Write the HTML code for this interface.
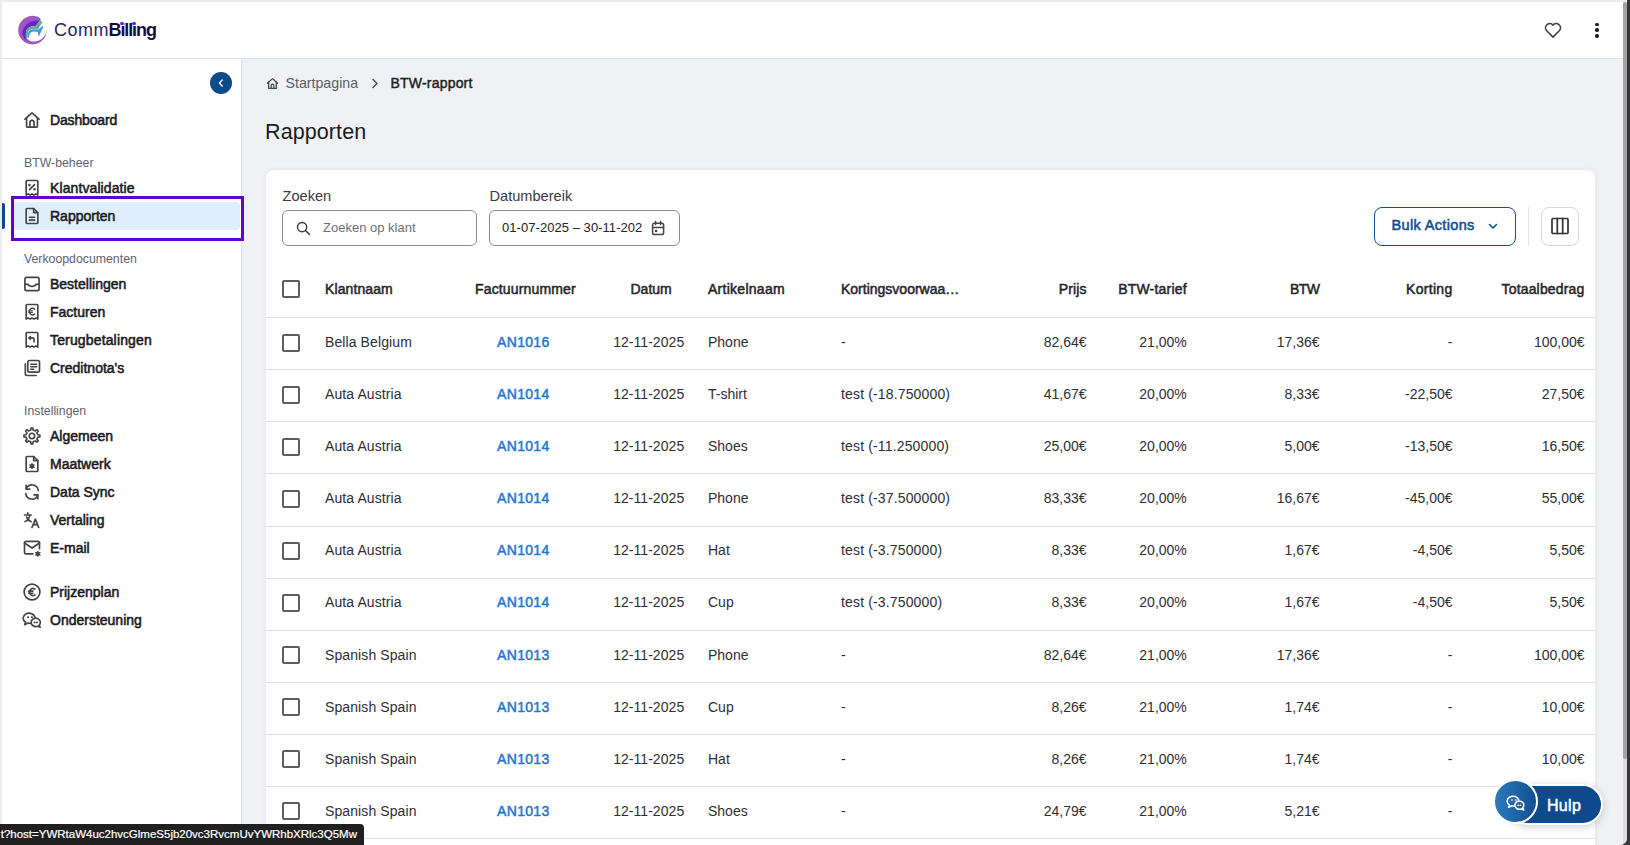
<!DOCTYPE html>
<html><head><meta charset="utf-8">
<style>
html,body{margin:0;padding:0;width:1630px;height:845px;overflow:hidden;background:#373737;font-family:"Liberation Sans", sans-serif;}
#wrap{position:absolute;left:0;top:0;width:1627px;height:845px;overflow:hidden;background:#ececec;border-bottom-right-radius:7px;}
.t{position:absolute;white-space:nowrap;}
</style></head><body><div id="wrap">
<div style="position:absolute;left:2px;top:2px;width:1621px;height:56px;background:#fff;"></div>
<div style="position:absolute;left:2px;top:58px;width:1621px;height:1px;background:#e1e3e6;"></div>
<div style="position:absolute;left:2px;top:59px;width:239px;height:786px;background:#fff;"></div>
<div style="position:absolute;left:241px;top:59px;width:1px;height:786px;background:#dcdee2;"></div>
<div style="position:absolute;left:242px;top:59px;width:1381px;height:786px;background:#f0f1f4;"></div>
<div style="position:absolute;left:1623px;top:2px;width:4px;height:843px;background:#dedede;"></div>
<div style="position:absolute;left:1626px;top:0px;width:1px;height:2px;background:#fff;"></div>
<div style="position:absolute;left:1623px;top:2px;width:4px;height:757px;background:#a3a3a3;border-radius:2px;"></div>
<svg style="position:absolute;left:15px;top:12px" width="36" height="36" viewBox="0 0 845 845">
<path d="M600,150 A335,335 0 1,0 745,430 C 720,580 600,695 440,695 C 310,695 235,590 240,470 C 245,330 400,190 600,185 Z" fill="#9d56c6"/>
<path d="M592,186 C 430,185 250,250 185,420 C 160,500 190,600 250,650 L 258,480 C 270,400 330,345 420,335 L 482,333 Z" fill="#6a24c3"/>
<path d="M592,186 L 640,238 L 530,415 C 470,395 400,385 340,420 C 300,450 295,520 300,600 L 262,610 C 255,560 245,490 265,430 C 300,350 380,335 482,333 Z" fill="#60ad90"/>
<path d="M650,330 L 662,360 L 555,585 L 538,478 C 480,450 400,455 360,490 C 335,520 330,560 330,610 L 300,600 C 295,520 305,460 345,430 C 400,395 470,400 530,425 Z" fill="#419ade"/>
</svg>
<div class="t" style="left:54px;top:19.5px;font-size:18px;line-height:20px;font-weight:normal;color:#2b2460;letter-spacing:0.5px;">Comm</div>
<div class="t" style="left:108.5px;top:19.5px;font-size:18px;line-height:20px;font-weight:bold;color:#150c44;letter-spacing:-1.1px;">Billing</div>
<div style="position:absolute;left:120.3px;top:22.2px;width:3.4px;height:3.2px;background:#fff;"></div>
<div style="position:absolute;left:132.3px;top:22.2px;width:3.4px;height:3.2px;background:#fff;"></div>
<div style="position:absolute;left:120.2px;top:22.1px;width:3.4px;height:3.4px;background:#6a1fd6;border-radius:50%;"></div>
<div style="position:absolute;left:132.2px;top:22.1px;width:3.4px;height:3.4px;background:#6a1fd6;border-radius:50%;"></div>
<svg style="position:absolute;left:1543px;top:19.6px;" width="20" height="20" viewBox="0 0 24 24" fill="none" stroke="#454545" stroke-width="2" stroke-linecap="round" stroke-linejoin="round"><path d="M12 20.5 L4.2 12.6 A4.6 4.6 0 0 1 12 6.2 A4.6 4.6 0 0 1 19.8 12.6 Z"/></svg>
<div style="position:absolute;left:1595.3px;top:22.55px;width:3.3px;height:3.3px;background:#1e1e1e;border-radius:50%;"></div>
<div style="position:absolute;left:1595.3px;top:28.35px;width:3.3px;height:3.3px;background:#1e1e1e;border-radius:50%;"></div>
<div style="position:absolute;left:1595.3px;top:34.25px;width:3.3px;height:3.3px;background:#1e1e1e;border-radius:50%;"></div>
<div style="position:absolute;left:210px;top:72px;width:22px;height:22px;background:#0c4a8c;border-radius:50%;"></div>
<svg style="position:absolute;left:215px;top:77px;" width="12" height="12" viewBox="0 0 12 12" fill="none" stroke="#fff" stroke-width="1.4" stroke-linecap="round" stroke-linejoin="round"><path d="M7.2 3 L4.4 6 L7.2 9"/></svg>
<div style="position:absolute;left:12px;top:202px;width:228px;height:28px;background:#dfeefd;border-radius:4px;"></div>
<div style="position:absolute;left:2px;top:203px;width:3px;height:26px;background:#0c4a8c;border-radius:0 2px 2px 0;"></div>
<div style="position:absolute;left:11px;top:196px;width:227px;height:39px;border:3px solid #6300cc;"></div>
<div class="t" style="left:50px;top:110.0px;font-size:14px;line-height:20px;font-weight:normal;color:#1b1b1f;letter-spacing:-0.15px;-webkit-text-stroke:0.55px #1b1b1f;">Dashboard</div>
<svg style="position:absolute;left:22px;top:110px;" width="20" height="20" viewBox="0 0 24 24" fill="none" stroke="#454545" stroke-width="2" stroke-linecap="round" stroke-linejoin="round"><path d="M3.5 11 L12 3.5 L20.5 11"/><path d="M5.5 9.5 V19.5 A1 1 0 0 0 6.5 20.5 H17.5 A1 1 0 0 0 18.5 19.5 V9.5"/><path d="M9.5 20.5 V15 A2.5 2.5 0 0 1 14.5 15 V20.5"/></svg>
<div class="t" style="left:50px;top:178.0px;font-size:14px;line-height:20px;font-weight:normal;color:#1b1b1f;letter-spacing:0.1px;-webkit-text-stroke:0.55px #1b1b1f;">Klantvalidatie</div>
<svg style="position:absolute;left:22px;top:178px;" width="20" height="20" viewBox="0 0 24 24" fill="none" stroke="#454545" stroke-width="2" stroke-linecap="round" stroke-linejoin="round"><path d="M5 20.5 V4 A1 1 0 0 1 6 3 H18 A1 1 0 0 1 19 4 V20.5 L16.7 19 L14.3 20.5 L12 19 L9.7 20.5 L7.3 19 Z"/><path d="M9 14 L15 8"/><circle cx="9" cy="8.5" r="0.6" fill="#454545"/><circle cx="15" cy="13.5" r="0.6" fill="#454545"/></svg>
<div class="t" style="left:50px;top:206.0px;font-size:14px;line-height:20px;font-weight:normal;color:#1b1b1f;letter-spacing:0px;-webkit-text-stroke:0.55px #1b1b1f;">Rapporten</div>
<svg style="position:absolute;left:22px;top:206px;" width="20" height="20" viewBox="0 0 24 24" fill="none" stroke="#454545" stroke-width="2" stroke-linecap="round" stroke-linejoin="round"><path d="M6 3 H14 L19 8 V20 A1 1 0 0 1 18 21 H6 A1 1 0 0 1 5 20 V4 A1 1 0 0 1 6 3 Z"/><path d="M14 3 V8 H19"/><path d="M9 13.5 H15"/><path d="M9 17 H15"/></svg>
<div class="t" style="left:50px;top:274.0px;font-size:14px;line-height:20px;font-weight:normal;color:#1b1b1f;letter-spacing:0px;-webkit-text-stroke:0.55px #1b1b1f;">Bestellingen</div>
<svg style="position:absolute;left:22px;top:274px;" width="20" height="20" viewBox="0 0 24 24" fill="none" stroke="#454545" stroke-width="2" stroke-linecap="round" stroke-linejoin="round"><rect x="3.5" y="4" width="17" height="16" rx="2"/><path d="M3.5 12.5 H7.5 C8.5 15.5 15.5 15.5 16.5 12.5 H20.5"/></svg>
<div class="t" style="left:50px;top:302.0px;font-size:14px;line-height:20px;font-weight:normal;color:#1b1b1f;letter-spacing:0px;-webkit-text-stroke:0.55px #1b1b1f;">Facturen</div>
<svg style="position:absolute;left:22px;top:302px;" width="20" height="20" viewBox="0 0 24 24" fill="none" stroke="#454545" stroke-width="2" stroke-linecap="round" stroke-linejoin="round"><path d="M5 20.5 V4 A1 1 0 0 1 6 3 H18 A1 1 0 0 1 19 4 V20.5 L16.7 19 L14.3 20.5 L12 19 L9.7 20.5 L7.3 19 Z"/><path d="M15.2 8.6 A3.9 3.9 0 1 0 15.2 14.4" stroke-width="1.7"/><path d="M8.2 10.6 H12.6 M8.2 12.6 H12.6" stroke-width="1.4"/></svg>
<div class="t" style="left:50px;top:330.0px;font-size:14px;line-height:20px;font-weight:normal;color:#1b1b1f;letter-spacing:0.15px;-webkit-text-stroke:0.55px #1b1b1f;">Terugbetalingen</div>
<svg style="position:absolute;left:22px;top:330px;" width="20" height="20" viewBox="0 0 24 24" fill="none" stroke="#454545" stroke-width="2" stroke-linecap="round" stroke-linejoin="round"><path d="M5 20.5 V4 A1 1 0 0 1 6 3 H18 A1 1 0 0 1 19 4 V20.5 L16.7 19 L14.3 20.5 L12 19 L9.7 20.5 L7.3 19 Z"/><path d="M10 8 L8.5 9.5 L10 11"/><path d="M8.5 9.5 H12.5 A2 2 0 0 1 14.5 11.5 V14"/></svg>
<div class="t" style="left:50px;top:358.0px;font-size:14px;line-height:20px;font-weight:normal;color:#1b1b1f;letter-spacing:0px;-webkit-text-stroke:0.55px #1b1b1f;">Creditnota's</div>
<svg style="position:absolute;left:22px;top:358px;" width="20" height="20" viewBox="0 0 24 24" fill="none" stroke="#454545" stroke-width="2" stroke-linecap="round" stroke-linejoin="round"><rect x="7" y="3" width="14" height="14" rx="2"/><path d="M4 7 V19 A2 2 0 0 0 6 21 H17"/><path d="M10.5 7.5 H17.5 M10.5 10.5 H17.5 M10.5 13.5 H14"/></svg>
<div class="t" style="left:50px;top:426.0px;font-size:14px;line-height:20px;font-weight:normal;color:#1b1b1f;letter-spacing:0px;-webkit-text-stroke:0.55px #1b1b1f;">Algemeen</div>
<svg style="position:absolute;left:22px;top:426px;" width="20" height="20" viewBox="0 0 24 24" fill="none" stroke="#454545" stroke-width="2" stroke-linecap="round" stroke-linejoin="round"><circle cx="11.9" cy="11.9" r="3.2"/><path d="M18.96 10.47 L21.43 10.75 L21.43 13.05 L18.96 13.33 L17.90 15.88 L19.45 17.83 L17.83 19.45 L15.88 17.90 L13.33 18.96 L13.05 21.43 L10.75 21.43 L10.47 18.96 L7.92 17.90 L5.97 19.45 L4.35 17.83 L5.90 15.88 L4.84 13.33 L2.37 13.05 L2.37 10.75 L4.84 10.47 L5.90 7.92 L4.35 5.97 L5.97 4.35 L7.92 5.90 L10.47 4.84 L10.75 2.37 L13.05 2.37 L13.33 4.84 L15.88 5.90 L17.83 4.35 L19.45 5.97 L17.90 7.92 Z"/></svg>
<div class="t" style="left:50px;top:454.0px;font-size:14px;line-height:20px;font-weight:normal;color:#1b1b1f;letter-spacing:0px;-webkit-text-stroke:0.55px #1b1b1f;">Maatwerk</div>
<svg style="position:absolute;left:22px;top:454px;" width="20" height="20" viewBox="0 0 24 24" fill="none" stroke="#454545" stroke-width="2" stroke-linecap="round" stroke-linejoin="round"><path d="M6 3 H14 L19 8 V20 A1 1 0 0 1 18 21 H6 A1 1 0 0 1 5 20 V4 A1 1 0 0 1 6 3 Z"/><path d="M14 3 V8 H19"/><circle cx="12" cy="14.5" r="1.6" fill="#454545"/><path d="M12 11.5 V17.5 M9.4 13 L14.6 16 M9.4 16 L14.6 13" stroke-width="1.6"/></svg>
<div class="t" style="left:50px;top:482.0px;font-size:14px;line-height:20px;font-weight:normal;color:#1b1b1f;letter-spacing:0px;-webkit-text-stroke:0.55px #1b1b1f;">Data Sync</div>
<svg style="position:absolute;left:22px;top:482px;" width="20" height="20" viewBox="0 0 24 24" fill="none" stroke="#454545" stroke-width="2" stroke-linecap="round" stroke-linejoin="round"><path d="M19.5 10 A7.5 7.5 0 0 0 5 8.5"/><path d="M5 4 V8.5 H9.5"/><path d="M4.5 14 A7.5 7.5 0 0 0 19 15.5"/><path d="M19 20 V15.5 H14.5"/></svg>
<div class="t" style="left:50px;top:510.0px;font-size:14px;line-height:20px;font-weight:normal;color:#1b1b1f;letter-spacing:0px;-webkit-text-stroke:0.55px #1b1b1f;">Vertaling</div>
<svg style="position:absolute;left:22px;top:510px;" width="20" height="20" viewBox="0 0 24 24" fill="none" stroke="#454545" stroke-width="2" stroke-linecap="round" stroke-linejoin="round"><path d="M3 6 H11 M7 3.5 V6 M9.5 6 C9 10 6.5 12.5 3.5 14 M5.5 8.5 C6.5 11 8.5 13 11 14"/><path d="M12 21 L16 11 L20 21 M13.5 17.5 H18.5"/></svg>
<div class="t" style="left:50px;top:538.0px;font-size:14px;line-height:20px;font-weight:normal;color:#1b1b1f;letter-spacing:0px;-webkit-text-stroke:0.55px #1b1b1f;">E-mail</div>
<svg style="position:absolute;left:22px;top:538px;" width="20" height="20" viewBox="0 0 24 24" fill="none" stroke="#454545" stroke-width="2" stroke-linecap="round" stroke-linejoin="round"><path d="M13 19 H5 A2 2 0 0 1 3 17 V6 A2 2 0 0 1 5 4 H19 A2 2 0 0 1 21 6 V13"/><path d="M3 6 L12 12 L21 6"/><circle cx="19" cy="19" r="1.4" fill="#454545"/><path d="M19 16 V22 M16.4 17.5 L21.6 20.5 M16.4 20.5 L21.6 17.5" stroke-width="1.6"/></svg>
<div class="t" style="left:50px;top:582.0px;font-size:14px;line-height:20px;font-weight:normal;color:#1b1b1f;letter-spacing:0px;-webkit-text-stroke:0.55px #1b1b1f;">Prijzenplan</div>
<svg style="position:absolute;left:22px;top:582px;" width="20" height="20" viewBox="0 0 24 24" fill="none" stroke="#454545" stroke-width="2" stroke-linecap="round" stroke-linejoin="round"><circle cx="12" cy="12" r="9.5"/><path d="M15.5 8.5 A4.2 4.2 0 1 0 15.5 15.5"/><path d="M8 11 H13 M8 13.5 H13"/></svg>
<div class="t" style="left:50px;top:610.0px;font-size:14px;line-height:20px;font-weight:normal;color:#1b1b1f;letter-spacing:0px;-webkit-text-stroke:0.55px #1b1b1f;">Ondersteuning</div>
<svg style="position:absolute;left:22px;top:610px;" width="20" height="20" viewBox="0 0 24 24" fill="none" stroke="#454545" stroke-width="2" stroke-linecap="round" stroke-linejoin="round"><path d="M15.6 8.6 A7.2 6 0 1 0 4.3 14.7 L3.2 17.6 L7.2 15.6 A7.2 6 0 0 0 10.2 15.95"/><path d="M20.5 18.3 L21.8 20.8 L18.5 19.5 A5.6 5 0 1 1 20.5 18.3 Z"/><path d="M7.1 8.6 H7.6 M11.6 8.6 H12.1 M14.8 14.9 H15.3 M17.6 14.9 H18.1"/></svg>
<div class="t" style="left:24px;top:152.7px;font-size:12.3px;line-height:20px;font-weight:normal;color:#5f6470;letter-spacing:0px;">BTW-beheer</div>
<div class="t" style="left:24px;top:248.8px;font-size:12.3px;line-height:20px;font-weight:normal;color:#5f6470;letter-spacing:0px;">Verkoopdocumenten</div>
<div class="t" style="left:24px;top:400.8px;font-size:12.3px;line-height:20px;font-weight:normal;color:#5f6470;letter-spacing:0px;">Instellingen</div>
<svg style="position:absolute;left:265.5px;top:76.5px;" width="13" height="13" viewBox="0 0 24 24" fill="none" stroke="#454545" stroke-width="2.3" stroke-linecap="round" stroke-linejoin="round"><path d="M2.5 11.5 L12 3 L21.5 11.5"/><path d="M5 9.5 V21 H19 V9.5"/><path d="M9.5 21 V15.5 A2.5 2.5 0 0 1 14.5 15.5 V21"/></svg>
<div class="t" style="left:285.5px;top:73.2px;font-size:14.2px;line-height:20px;font-weight:normal;color:#5a5e66;letter-spacing:0px;">Startpagina</div>
<svg style="position:absolute;left:370px;top:78px;" width="10" height="11" viewBox="0 0 10 11" fill="none" stroke="#454545" stroke-width="1.4" stroke-linecap="round" stroke-linejoin="round"><path d="M3 1.5 L7 5.5 L3 9.5"/></svg>
<div class="t" style="left:390.5px;top:73.2px;font-size:14px;line-height:20px;font-weight:normal;color:#1f1f24;letter-spacing:0.2px;-webkit-text-stroke:0.45px #1f1f24;">BTW-rapport</div>
<div class="t" style="left:265px;top:118.0px;font-size:21.5px;line-height:28px;font-weight:normal;color:#1a1a1f;letter-spacing:0.1px;">Rapporten</div>
<div style="position:absolute;left:266px;top:170px;width:1329px;height:700px;background:#fff;border-radius:8px;box-shadow:0 0 5px rgba(0,0,0,0.07);"></div>
<div class="t" style="left:282.5px;top:186.0px;font-size:14.6px;line-height:20px;font-weight:normal;color:#3b3b40;letter-spacing:0px;">Zoeken</div>
<div class="t" style="left:489.5px;top:186.0px;font-size:14.6px;line-height:20px;font-weight:normal;color:#3b3b40;letter-spacing:0px;">Datumbereik</div>
<div style="position:absolute;left:282px;top:210px;width:193px;height:34px;border:1px solid #8c8c8c;border-radius:6px;"></div>
<div style="position:absolute;left:489px;top:210px;width:189px;height:34px;border:1px solid #8c8c8c;border-radius:6px;"></div>
<svg style="position:absolute;left:295px;top:220px;" width="17" height="17" viewBox="0 0 24 24" fill="none" stroke="#3a3a3a" stroke-width="2" stroke-linecap="round" stroke-linejoin="round"><circle cx="10" cy="10" r="6.5"/><path d="M15 15 L20.5 20.5"/></svg>
<div class="t" style="left:323px;top:217.7px;font-size:13px;line-height:20px;font-weight:normal;color:#6d7078;letter-spacing:0px;">Zoeken op klant</div>
<div class="t" style="left:502px;top:217.7px;font-size:13px;line-height:20px;font-weight:normal;color:#222;letter-spacing:0.05px;">01-07-2025 – 30-11-202</div>
<svg style="position:absolute;left:649px;top:219px;" width="17" height="17" viewBox="0 0 17 17" fill="none" stroke="#454545" stroke-width="1.5" stroke-linecap="round" stroke-linejoin="round"><rect x="3.6" y="4.2" width="11" height="11.3" rx="1.8"/><path d="M3.6 8.4 H14.6 M6.6 2.6 V5.4 M11.6 2.6 V5.4"/><rect x="6" y="10.8" width="2.2" height="2.2" fill="#454545" stroke="none"/></svg>
<div style="position:absolute;left:1374px;top:207px;width:140px;height:37px;border:1px solid #104f93;border-radius:8px;"></div>
<div class="t" style="left:1391.5px;top:215.0px;font-size:14.5px;line-height:20px;font-weight:normal;color:#124f95;letter-spacing:0.35px;-webkit-text-stroke:0.55px #124f95;">Bulk Actions</div>
<svg style="position:absolute;left:1487px;top:220px;" width="12" height="12" viewBox="0 0 12 12" fill="none" stroke="#124f95" stroke-width="1.6" stroke-linecap="round" stroke-linejoin="round"><path d="M2.5 4.5 L6 8 L9.5 4.5"/></svg>
<div style="position:absolute;left:1528px;top:207px;width:1px;height:39px;background:#e3e4e7;"></div>
<div style="position:absolute;left:1541px;top:207px;width:36px;height:37px;border:1px solid #d5d7db;border-radius:8px;"></div>
<svg style="position:absolute;left:1550px;top:216px;" width="20" height="20" viewBox="0 0 20 20" fill="none" stroke="#333" stroke-width="1.7" stroke-linecap="round" stroke-linejoin="round"><rect x="2" y="2.5" width="16" height="15" rx="1"/><path d="M7.3 2.5 V17.5 M12.7 2.5 V17.5"/></svg>
<div style="position:absolute;left:282px;top:280px;width:14px;height:14px;border:2px solid #5e5e5e;border-radius:2px;"></div>
<div class="t" style="left:325px;top:279.0px;font-size:14px;line-height:20px;font-weight:normal;color:#25252a;letter-spacing:0.1px;-webkit-text-stroke:0.5px #25252a;">Klantnaam</div>
<div class="t" style="left:475px;top:279.0px;font-size:14px;line-height:20px;font-weight:normal;color:#25252a;letter-spacing:0.15px;-webkit-text-stroke:0.5px #25252a;">Factuurnummer</div>
<div class="t" style="left:630.5px;top:279.0px;font-size:14px;line-height:20px;font-weight:normal;color:#25252a;letter-spacing:0px;-webkit-text-stroke:0.5px #25252a;">Datum</div>
<div class="t" style="left:708px;top:279.0px;font-size:14px;line-height:20px;font-weight:normal;color:#25252a;letter-spacing:0.27px;-webkit-text-stroke:0.5px #25252a;">Artikelnaam</div>
<div class="t" style="left:841px;top:279.0px;font-size:14px;line-height:20px;font-weight:normal;color:#25252a;letter-spacing:0px;-webkit-text-stroke:0.5px #25252a;">Kortingsvoorwaa…</div>
<div class="t" style="right:540.5px;top:279.0px;font-size:14px;line-height:20px;font-weight:normal;color:#25252a;letter-spacing:0.1px;-webkit-text-stroke:0.5px #25252a;">Prijs</div>
<div class="t" style="right:440.20000000000005px;top:279.0px;font-size:14px;line-height:20px;font-weight:normal;color:#25252a;letter-spacing:0.2px;-webkit-text-stroke:0.5px #25252a;">BTW-tarief</div>
<div class="t" style="right:307.5px;top:279.0px;font-size:14px;line-height:20px;font-weight:normal;color:#25252a;letter-spacing:-0.5px;-webkit-text-stroke:0.5px #25252a;">BTW</div>
<div class="t" style="right:174.5px;top:279.0px;font-size:14px;line-height:20px;font-weight:normal;color:#25252a;letter-spacing:0.3px;-webkit-text-stroke:0.5px #25252a;">Korting</div>
<div class="t" style="right:42.5px;top:279.0px;font-size:14px;line-height:20px;font-weight:normal;color:#25252a;letter-spacing:0.17px;-webkit-text-stroke:0.5px #25252a;">Totaalbedrag</div>
<div style="position:absolute;left:266px;top:317px;width:1329px;height:1px;background:#e0e0e0;"></div>
<div style="position:absolute;left:282px;top:333.5px;width:14px;height:14px;border:2px solid #5e5e5e;border-radius:2px;"></div>
<div class="t" style="left:325px;top:332.0px;font-size:14px;line-height:20px;font-weight:normal;color:#2e2e33;letter-spacing:0.1px;">Bella Belgium</div>
<div class="t" style="left:323.29999999999995px;width:400px;text-align:center;top:332.0px;font-size:14px;line-height:20px;font-weight:normal;color:#1f78d1;letter-spacing:0.3px;-webkit-text-stroke:0.5px #1f78d1;">AN1016</div>
<div class="t" style="left:448.70000000000005px;width:400px;text-align:center;top:332.0px;font-size:14px;line-height:20px;font-weight:normal;color:#2e2e33;letter-spacing:0.05px;">12-11-2025</div>
<div class="t" style="left:708px;top:332.0px;font-size:14px;line-height:20px;font-weight:normal;color:#2e2e33;letter-spacing:0px;">Phone</div>
<div class="t" style="left:841px;top:332.0px;font-size:14px;line-height:20px;font-weight:normal;color:#2e2e33;letter-spacing:0.15px;">-</div>
<div class="t" style="right:540.5px;top:332.0px;font-size:14px;line-height:20px;font-weight:normal;color:#2e2e33;letter-spacing:0px;">82,64€</div>
<div class="t" style="right:440.20000000000005px;top:332.0px;font-size:14px;line-height:20px;font-weight:normal;color:#2e2e33;letter-spacing:0px;">21,00%</div>
<div class="t" style="right:307.5px;top:332.0px;font-size:14px;line-height:20px;font-weight:normal;color:#2e2e33;letter-spacing:0px;">17,36€</div>
<div class="t" style="right:174.5px;top:332.0px;font-size:14px;line-height:20px;font-weight:normal;color:#2e2e33;letter-spacing:0px;">-</div>
<div class="t" style="right:42.5px;top:332.0px;font-size:14px;line-height:20px;font-weight:normal;color:#2e2e33;letter-spacing:0px;">100,00€</div>
<div style="position:absolute;left:266px;top:369px;width:1329px;height:1px;background:#e0e0e0;"></div>
<div style="position:absolute;left:282px;top:385.6px;width:14px;height:14px;border:2px solid #5e5e5e;border-radius:2px;"></div>
<div class="t" style="left:325px;top:384.1px;font-size:14px;line-height:20px;font-weight:normal;color:#2e2e33;letter-spacing:0.1px;">Auta Austria</div>
<div class="t" style="left:323.29999999999995px;width:400px;text-align:center;top:384.1px;font-size:14px;line-height:20px;font-weight:normal;color:#1f78d1;letter-spacing:0.3px;-webkit-text-stroke:0.5px #1f78d1;">AN1014</div>
<div class="t" style="left:448.70000000000005px;width:400px;text-align:center;top:384.1px;font-size:14px;line-height:20px;font-weight:normal;color:#2e2e33;letter-spacing:0.05px;">12-11-2025</div>
<div class="t" style="left:708px;top:384.1px;font-size:14px;line-height:20px;font-weight:normal;color:#2e2e33;letter-spacing:0px;">T-shirt</div>
<div class="t" style="left:841px;top:384.1px;font-size:14px;line-height:20px;font-weight:normal;color:#2e2e33;letter-spacing:0.15px;">test (-18.750000)</div>
<div class="t" style="right:540.5px;top:384.1px;font-size:14px;line-height:20px;font-weight:normal;color:#2e2e33;letter-spacing:0px;">41,67€</div>
<div class="t" style="right:440.20000000000005px;top:384.1px;font-size:14px;line-height:20px;font-weight:normal;color:#2e2e33;letter-spacing:0px;">20,00%</div>
<div class="t" style="right:307.5px;top:384.1px;font-size:14px;line-height:20px;font-weight:normal;color:#2e2e33;letter-spacing:0px;">8,33€</div>
<div class="t" style="right:174.5px;top:384.1px;font-size:14px;line-height:20px;font-weight:normal;color:#2e2e33;letter-spacing:0px;">-22,50€</div>
<div class="t" style="right:42.5px;top:384.1px;font-size:14px;line-height:20px;font-weight:normal;color:#2e2e33;letter-spacing:0px;">27,50€</div>
<div style="position:absolute;left:266px;top:421px;width:1329px;height:1px;background:#e0e0e0;"></div>
<div style="position:absolute;left:282px;top:437.7px;width:14px;height:14px;border:2px solid #5e5e5e;border-radius:2px;"></div>
<div class="t" style="left:325px;top:436.2px;font-size:14px;line-height:20px;font-weight:normal;color:#2e2e33;letter-spacing:0.1px;">Auta Austria</div>
<div class="t" style="left:323.29999999999995px;width:400px;text-align:center;top:436.2px;font-size:14px;line-height:20px;font-weight:normal;color:#1f78d1;letter-spacing:0.3px;-webkit-text-stroke:0.5px #1f78d1;">AN1014</div>
<div class="t" style="left:448.70000000000005px;width:400px;text-align:center;top:436.2px;font-size:14px;line-height:20px;font-weight:normal;color:#2e2e33;letter-spacing:0.05px;">12-11-2025</div>
<div class="t" style="left:708px;top:436.2px;font-size:14px;line-height:20px;font-weight:normal;color:#2e2e33;letter-spacing:0px;">Shoes</div>
<div class="t" style="left:841px;top:436.2px;font-size:14px;line-height:20px;font-weight:normal;color:#2e2e33;letter-spacing:0.15px;">test (-11.250000)</div>
<div class="t" style="right:540.5px;top:436.2px;font-size:14px;line-height:20px;font-weight:normal;color:#2e2e33;letter-spacing:0px;">25,00€</div>
<div class="t" style="right:440.20000000000005px;top:436.2px;font-size:14px;line-height:20px;font-weight:normal;color:#2e2e33;letter-spacing:0px;">20,00%</div>
<div class="t" style="right:307.5px;top:436.2px;font-size:14px;line-height:20px;font-weight:normal;color:#2e2e33;letter-spacing:0px;">5,00€</div>
<div class="t" style="right:174.5px;top:436.2px;font-size:14px;line-height:20px;font-weight:normal;color:#2e2e33;letter-spacing:0px;">-13,50€</div>
<div class="t" style="right:42.5px;top:436.2px;font-size:14px;line-height:20px;font-weight:normal;color:#2e2e33;letter-spacing:0px;">16,50€</div>
<div style="position:absolute;left:266px;top:473px;width:1329px;height:1px;background:#e0e0e0;"></div>
<div style="position:absolute;left:282px;top:489.7px;width:14px;height:14px;border:2px solid #5e5e5e;border-radius:2px;"></div>
<div class="t" style="left:325px;top:488.2px;font-size:14px;line-height:20px;font-weight:normal;color:#2e2e33;letter-spacing:0.1px;">Auta Austria</div>
<div class="t" style="left:323.29999999999995px;width:400px;text-align:center;top:488.2px;font-size:14px;line-height:20px;font-weight:normal;color:#1f78d1;letter-spacing:0.3px;-webkit-text-stroke:0.5px #1f78d1;">AN1014</div>
<div class="t" style="left:448.70000000000005px;width:400px;text-align:center;top:488.2px;font-size:14px;line-height:20px;font-weight:normal;color:#2e2e33;letter-spacing:0.05px;">12-11-2025</div>
<div class="t" style="left:708px;top:488.2px;font-size:14px;line-height:20px;font-weight:normal;color:#2e2e33;letter-spacing:0px;">Phone</div>
<div class="t" style="left:841px;top:488.2px;font-size:14px;line-height:20px;font-weight:normal;color:#2e2e33;letter-spacing:0.15px;">test (-37.500000)</div>
<div class="t" style="right:540.5px;top:488.2px;font-size:14px;line-height:20px;font-weight:normal;color:#2e2e33;letter-spacing:0px;">83,33€</div>
<div class="t" style="right:440.20000000000005px;top:488.2px;font-size:14px;line-height:20px;font-weight:normal;color:#2e2e33;letter-spacing:0px;">20,00%</div>
<div class="t" style="right:307.5px;top:488.2px;font-size:14px;line-height:20px;font-weight:normal;color:#2e2e33;letter-spacing:0px;">16,67€</div>
<div class="t" style="right:174.5px;top:488.2px;font-size:14px;line-height:20px;font-weight:normal;color:#2e2e33;letter-spacing:0px;">-45,00€</div>
<div class="t" style="right:42.5px;top:488.2px;font-size:14px;line-height:20px;font-weight:normal;color:#2e2e33;letter-spacing:0px;">55,00€</div>
<div style="position:absolute;left:266px;top:526px;width:1329px;height:1px;background:#e0e0e0;"></div>
<div style="position:absolute;left:282px;top:541.8px;width:14px;height:14px;border:2px solid #5e5e5e;border-radius:2px;"></div>
<div class="t" style="left:325px;top:540.3px;font-size:14px;line-height:20px;font-weight:normal;color:#2e2e33;letter-spacing:0.1px;">Auta Austria</div>
<div class="t" style="left:323.29999999999995px;width:400px;text-align:center;top:540.3px;font-size:14px;line-height:20px;font-weight:normal;color:#1f78d1;letter-spacing:0.3px;-webkit-text-stroke:0.5px #1f78d1;">AN1014</div>
<div class="t" style="left:448.70000000000005px;width:400px;text-align:center;top:540.3px;font-size:14px;line-height:20px;font-weight:normal;color:#2e2e33;letter-spacing:0.05px;">12-11-2025</div>
<div class="t" style="left:708px;top:540.3px;font-size:14px;line-height:20px;font-weight:normal;color:#2e2e33;letter-spacing:0px;">Hat</div>
<div class="t" style="left:841px;top:540.3px;font-size:14px;line-height:20px;font-weight:normal;color:#2e2e33;letter-spacing:0.15px;">test (-3.750000)</div>
<div class="t" style="right:540.5px;top:540.3px;font-size:14px;line-height:20px;font-weight:normal;color:#2e2e33;letter-spacing:0px;">8,33€</div>
<div class="t" style="right:440.20000000000005px;top:540.3px;font-size:14px;line-height:20px;font-weight:normal;color:#2e2e33;letter-spacing:0px;">20,00%</div>
<div class="t" style="right:307.5px;top:540.3px;font-size:14px;line-height:20px;font-weight:normal;color:#2e2e33;letter-spacing:0px;">1,67€</div>
<div class="t" style="right:174.5px;top:540.3px;font-size:14px;line-height:20px;font-weight:normal;color:#2e2e33;letter-spacing:0px;">-4,50€</div>
<div class="t" style="right:42.5px;top:540.3px;font-size:14px;line-height:20px;font-weight:normal;color:#2e2e33;letter-spacing:0px;">5,50€</div>
<div style="position:absolute;left:266px;top:578px;width:1329px;height:1px;background:#e0e0e0;"></div>
<div style="position:absolute;left:282px;top:593.9px;width:14px;height:14px;border:2px solid #5e5e5e;border-radius:2px;"></div>
<div class="t" style="left:325px;top:592.4px;font-size:14px;line-height:20px;font-weight:normal;color:#2e2e33;letter-spacing:0.1px;">Auta Austria</div>
<div class="t" style="left:323.29999999999995px;width:400px;text-align:center;top:592.4px;font-size:14px;line-height:20px;font-weight:normal;color:#1f78d1;letter-spacing:0.3px;-webkit-text-stroke:0.5px #1f78d1;">AN1014</div>
<div class="t" style="left:448.70000000000005px;width:400px;text-align:center;top:592.4px;font-size:14px;line-height:20px;font-weight:normal;color:#2e2e33;letter-spacing:0.05px;">12-11-2025</div>
<div class="t" style="left:708px;top:592.4px;font-size:14px;line-height:20px;font-weight:normal;color:#2e2e33;letter-spacing:0px;">Cup</div>
<div class="t" style="left:841px;top:592.4px;font-size:14px;line-height:20px;font-weight:normal;color:#2e2e33;letter-spacing:0.15px;">test (-3.750000)</div>
<div class="t" style="right:540.5px;top:592.4px;font-size:14px;line-height:20px;font-weight:normal;color:#2e2e33;letter-spacing:0px;">8,33€</div>
<div class="t" style="right:440.20000000000005px;top:592.4px;font-size:14px;line-height:20px;font-weight:normal;color:#2e2e33;letter-spacing:0px;">20,00%</div>
<div class="t" style="right:307.5px;top:592.4px;font-size:14px;line-height:20px;font-weight:normal;color:#2e2e33;letter-spacing:0px;">1,67€</div>
<div class="t" style="right:174.5px;top:592.4px;font-size:14px;line-height:20px;font-weight:normal;color:#2e2e33;letter-spacing:0px;">-4,50€</div>
<div class="t" style="right:42.5px;top:592.4px;font-size:14px;line-height:20px;font-weight:normal;color:#2e2e33;letter-spacing:0px;">5,50€</div>
<div style="position:absolute;left:266px;top:630px;width:1329px;height:1px;background:#e0e0e0;"></div>
<div style="position:absolute;left:282px;top:646.0px;width:14px;height:14px;border:2px solid #5e5e5e;border-radius:2px;"></div>
<div class="t" style="left:325px;top:644.5px;font-size:14px;line-height:20px;font-weight:normal;color:#2e2e33;letter-spacing:0.1px;">Spanish Spain</div>
<div class="t" style="left:323.29999999999995px;width:400px;text-align:center;top:644.5px;font-size:14px;line-height:20px;font-weight:normal;color:#1f78d1;letter-spacing:0.3px;-webkit-text-stroke:0.5px #1f78d1;">AN1013</div>
<div class="t" style="left:448.70000000000005px;width:400px;text-align:center;top:644.5px;font-size:14px;line-height:20px;font-weight:normal;color:#2e2e33;letter-spacing:0.05px;">12-11-2025</div>
<div class="t" style="left:708px;top:644.5px;font-size:14px;line-height:20px;font-weight:normal;color:#2e2e33;letter-spacing:0px;">Phone</div>
<div class="t" style="left:841px;top:644.5px;font-size:14px;line-height:20px;font-weight:normal;color:#2e2e33;letter-spacing:0.15px;">-</div>
<div class="t" style="right:540.5px;top:644.5px;font-size:14px;line-height:20px;font-weight:normal;color:#2e2e33;letter-spacing:0px;">82,64€</div>
<div class="t" style="right:440.20000000000005px;top:644.5px;font-size:14px;line-height:20px;font-weight:normal;color:#2e2e33;letter-spacing:0px;">21,00%</div>
<div class="t" style="right:307.5px;top:644.5px;font-size:14px;line-height:20px;font-weight:normal;color:#2e2e33;letter-spacing:0px;">17,36€</div>
<div class="t" style="right:174.5px;top:644.5px;font-size:14px;line-height:20px;font-weight:normal;color:#2e2e33;letter-spacing:0px;">-</div>
<div class="t" style="right:42.5px;top:644.5px;font-size:14px;line-height:20px;font-weight:normal;color:#2e2e33;letter-spacing:0px;">100,00€</div>
<div style="position:absolute;left:266px;top:682px;width:1329px;height:1px;background:#e0e0e0;"></div>
<div style="position:absolute;left:282px;top:698.1px;width:14px;height:14px;border:2px solid #5e5e5e;border-radius:2px;"></div>
<div class="t" style="left:325px;top:696.6px;font-size:14px;line-height:20px;font-weight:normal;color:#2e2e33;letter-spacing:0.1px;">Spanish Spain</div>
<div class="t" style="left:323.29999999999995px;width:400px;text-align:center;top:696.6px;font-size:14px;line-height:20px;font-weight:normal;color:#1f78d1;letter-spacing:0.3px;-webkit-text-stroke:0.5px #1f78d1;">AN1013</div>
<div class="t" style="left:448.70000000000005px;width:400px;text-align:center;top:696.6px;font-size:14px;line-height:20px;font-weight:normal;color:#2e2e33;letter-spacing:0.05px;">12-11-2025</div>
<div class="t" style="left:708px;top:696.6px;font-size:14px;line-height:20px;font-weight:normal;color:#2e2e33;letter-spacing:0px;">Cup</div>
<div class="t" style="left:841px;top:696.6px;font-size:14px;line-height:20px;font-weight:normal;color:#2e2e33;letter-spacing:0.15px;">-</div>
<div class="t" style="right:540.5px;top:696.6px;font-size:14px;line-height:20px;font-weight:normal;color:#2e2e33;letter-spacing:0px;">8,26€</div>
<div class="t" style="right:440.20000000000005px;top:696.6px;font-size:14px;line-height:20px;font-weight:normal;color:#2e2e33;letter-spacing:0px;">21,00%</div>
<div class="t" style="right:307.5px;top:696.6px;font-size:14px;line-height:20px;font-weight:normal;color:#2e2e33;letter-spacing:0px;">1,74€</div>
<div class="t" style="right:174.5px;top:696.6px;font-size:14px;line-height:20px;font-weight:normal;color:#2e2e33;letter-spacing:0px;">-</div>
<div class="t" style="right:42.5px;top:696.6px;font-size:14px;line-height:20px;font-weight:normal;color:#2e2e33;letter-spacing:0px;">10,00€</div>
<div style="position:absolute;left:266px;top:734px;width:1329px;height:1px;background:#e0e0e0;"></div>
<div style="position:absolute;left:282px;top:750.1px;width:14px;height:14px;border:2px solid #5e5e5e;border-radius:2px;"></div>
<div class="t" style="left:325px;top:748.6px;font-size:14px;line-height:20px;font-weight:normal;color:#2e2e33;letter-spacing:0.1px;">Spanish Spain</div>
<div class="t" style="left:323.29999999999995px;width:400px;text-align:center;top:748.6px;font-size:14px;line-height:20px;font-weight:normal;color:#1f78d1;letter-spacing:0.3px;-webkit-text-stroke:0.5px #1f78d1;">AN1013</div>
<div class="t" style="left:448.70000000000005px;width:400px;text-align:center;top:748.6px;font-size:14px;line-height:20px;font-weight:normal;color:#2e2e33;letter-spacing:0.05px;">12-11-2025</div>
<div class="t" style="left:708px;top:748.6px;font-size:14px;line-height:20px;font-weight:normal;color:#2e2e33;letter-spacing:0px;">Hat</div>
<div class="t" style="left:841px;top:748.6px;font-size:14px;line-height:20px;font-weight:normal;color:#2e2e33;letter-spacing:0.15px;">-</div>
<div class="t" style="right:540.5px;top:748.6px;font-size:14px;line-height:20px;font-weight:normal;color:#2e2e33;letter-spacing:0px;">8,26€</div>
<div class="t" style="right:440.20000000000005px;top:748.6px;font-size:14px;line-height:20px;font-weight:normal;color:#2e2e33;letter-spacing:0px;">21,00%</div>
<div class="t" style="right:307.5px;top:748.6px;font-size:14px;line-height:20px;font-weight:normal;color:#2e2e33;letter-spacing:0px;">1,74€</div>
<div class="t" style="right:174.5px;top:748.6px;font-size:14px;line-height:20px;font-weight:normal;color:#2e2e33;letter-spacing:0px;">-</div>
<div class="t" style="right:42.5px;top:748.6px;font-size:14px;line-height:20px;font-weight:normal;color:#2e2e33;letter-spacing:0px;">10,00€</div>
<div style="position:absolute;left:266px;top:786px;width:1329px;height:1px;background:#e0e0e0;"></div>
<div style="position:absolute;left:282px;top:802.2px;width:14px;height:14px;border:2px solid #5e5e5e;border-radius:2px;"></div>
<div class="t" style="left:325px;top:800.7px;font-size:14px;line-height:20px;font-weight:normal;color:#2e2e33;letter-spacing:0.1px;">Spanish Spain</div>
<div class="t" style="left:323.29999999999995px;width:400px;text-align:center;top:800.7px;font-size:14px;line-height:20px;font-weight:normal;color:#1f78d1;letter-spacing:0.3px;-webkit-text-stroke:0.5px #1f78d1;">AN1013</div>
<div class="t" style="left:448.70000000000005px;width:400px;text-align:center;top:800.7px;font-size:14px;line-height:20px;font-weight:normal;color:#2e2e33;letter-spacing:0.05px;">12-11-2025</div>
<div class="t" style="left:708px;top:800.7px;font-size:14px;line-height:20px;font-weight:normal;color:#2e2e33;letter-spacing:0px;">Shoes</div>
<div class="t" style="left:841px;top:800.7px;font-size:14px;line-height:20px;font-weight:normal;color:#2e2e33;letter-spacing:0.15px;">-</div>
<div class="t" style="right:540.5px;top:800.7px;font-size:14px;line-height:20px;font-weight:normal;color:#2e2e33;letter-spacing:0px;">24,79€</div>
<div class="t" style="right:440.20000000000005px;top:800.7px;font-size:14px;line-height:20px;font-weight:normal;color:#2e2e33;letter-spacing:0px;">21,00%</div>
<div class="t" style="right:307.5px;top:800.7px;font-size:14px;line-height:20px;font-weight:normal;color:#2e2e33;letter-spacing:0px;">5,21€</div>
<div class="t" style="right:174.5px;top:800.7px;font-size:14px;line-height:20px;font-weight:normal;color:#2e2e33;letter-spacing:0px;">-</div>
<div style="position:absolute;left:266px;top:838px;width:1329px;height:1px;background:#e0e0e0;"></div>
<div style="position:absolute;left:1508px;top:784px;width:95px;height:41px;background:#0e4a8b;border-radius:21px;border:2px solid #fff;box-shadow:0 2px 8px rgba(0,0,0,0.18);box-sizing:border-box;"></div>
<div style="position:absolute;left:1493px;top:779px;width:45px;height:45px;background:linear-gradient(90deg,#2a7bbd,#124f91);border-radius:50%;border:2px solid #fff;box-sizing:border-box;"></div>
<svg style="position:absolute;left:1506px;top:793px;" width="19.5" height="18" viewBox="0 0 24 22" fill="none" stroke="#fff" stroke-width="1.9" stroke-linecap="round" stroke-linejoin="round"><path d="M15.6 8.6 A7.2 6 0 1 0 4.3 14.7 L3.2 17.6 L7.2 15.6 A7.2 6 0 0 0 10.2 15.95"/><path d="M20.5 18.3 L21.8 20.8 L18.5 19.5 A5.6 5 0 1 1 20.5 18.3 Z"/><path d="M7.1 8.6 H7.6 M11.6 8.6 H12.1 M14.8 14.9 H15.3 M17.6 14.9 H18.1"/></svg>
<div class="t" style="left:1547px;top:795.5px;font-size:16px;line-height:20px;font-weight:normal;color:#fff;letter-spacing:0.3px;-webkit-text-stroke:0.5px #fff;">Hulp</div>
<div style="position:absolute;left:0px;top:824px;width:364px;height:21px;background:#202020;border-top-right-radius:4px;"></div>
<div class="t" style="left:0.7px;top:826.0px;font-size:11.5px;line-height:16px;font-weight:normal;color:#fff;letter-spacing:0px;-webkit-text-stroke:0.2px #fff;">t?host=YWRtaW4uc2hvcGlmeS5jb20vc3RvcmUvYWRhbXRlc3Q5Mw</div>
</div></body></html>
